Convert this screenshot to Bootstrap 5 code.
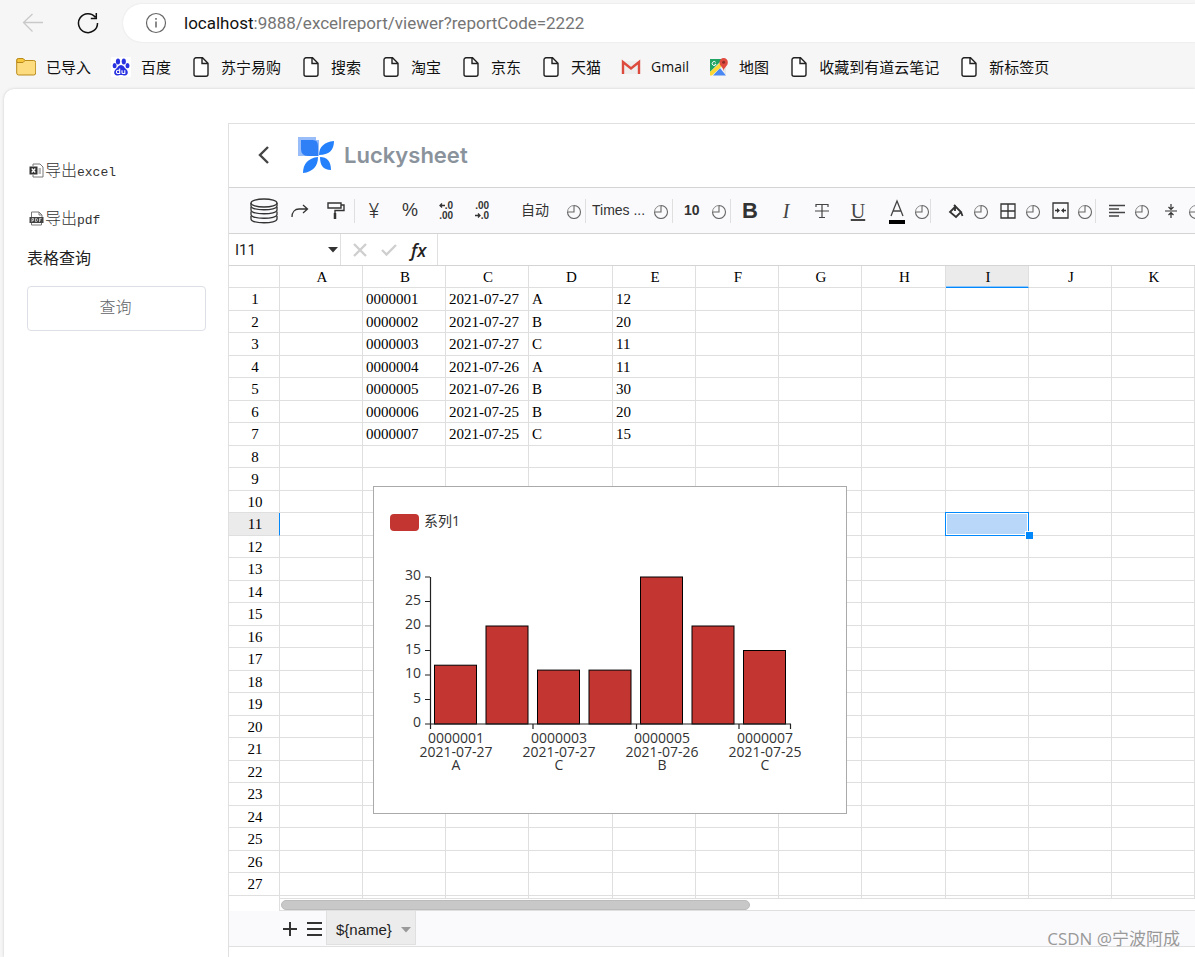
<!DOCTYPE html>
<html lang="zh-CN">
<head>
<meta charset="utf-8">
<meta name="viewport" content="width=device-width, initial-scale=1">
<title>Luckysheet</title>
<link href="https://cdn.jsdelivr.net/npm/bootstrap@5.3.0/dist/css/bootstrap.min.css" rel="stylesheet">
<style>
body{background:#f6f6f6;font-family:"Open Sans","Noto Sans CJK SC",sans-serif;color:#222;overflow:hidden}
button{background:none;border:0;padding:0;color:#333}
svg{display:block;flex:none}
.nav-row{height:45px;padding-left:22px}
.nav-row .reload{margin:0 24px 0 33px}
.address{height:38px;border-radius:19px 0 0 19px;background:#fff;padding-left:22px;gap:17px;box-shadow:0 0 2px #ddd}
.url{font:17px/24px Roboto,sans-serif;white-space:nowrap;color:#757575;outline:0}
.url b{font-weight:400;color:#111}
.marks{height:44px;padding-left:16px;gap:20px}
.marks a{display:flex;align-items:center;gap:10px;color:#111;text-decoration:none;font-size:15px;line-height:20px;white-space:nowrap}
.marks a.latin{font-size:14px}
.page{margin-left:4px;background:#fff;border-radius:10px 0 0 0;box-shadow:0 0 3px #ccc;min-height:calc(100vh - 89px)}
.side{width:224px;padding:69px 22px 0 23px;flex:none}
.side .export{display:flex;align-items:center;gap:1px;height:24px;margin-bottom:24px;font:300 16px/24px "Liberation Mono","Noto Sans CJK SC",monospace;color:#333;padding-left:2px}
.export>span{padding-top:4px}
.export .lat{font-size:13px}
.side h2{font-size:16px;line-height:24px;margin:-8px 0 16px;font-weight:400}
.query{height:45px;border:1px solid #dcdfe6;border-radius:4px;color:#606266;font-size:16px;font-weight:300;font-family:"Noto Sans CJK SC",sans-serif;width:179px;padding:0 2px 5px 0}
.sheet{border:1px solid #e0e0e0;border-width:1px 0 0 1px;margin-top:34px;min-width:0;overflow:hidden}
.brand-row{height:63px;padding:0 0 2px 27px}
.brand-name{font:600 22px/30px Inter,sans-serif;color:#8a939c}
.tools{height:47px;background:#fafafc;border:1px solid #d4d4d4;border-width:1px 0;padding-left:17px;white-space:nowrap}
.tools>*{flex:none}
.tools button{height:34px;display:flex;align-items:center;justify-content:center;font-family:"Liberation Sans","Noto Sans CJK SC",sans-serif}
.tool{width:36px}
.half{width:34px}
.drop{width:16px}
.split{display:flex;margin-right:2px}
.split.ink{margin:0 0 0 4px}
.rule{width:1px;height:24px;background:#dfdfdf}
.rule.loose{margin-right:1px}
.combo{justify-content:space-between!important;font-size:14px;padding:0 3px}
.combo.auto{width:85px;padding-left:21px}
.combo.family{width:86px;padding-left:6px}
.combo.size{width:57px;padding-left:11px;font-weight:700}
.dec{font:700 10px/10px "Liberation Sans",sans-serif;text-align:right}
.dec svg{display:inline-block;vertical-align:1px}
.tools .yen{font:300 20px/24px Roboto,sans-serif}
.tools .pct{font-size:18px}
.tools .bold-btn{font-size:22px;font-weight:700}
.tools .ser{font-family:"Liberation Serif",serif;font-size:20px;color:#444}
.formula{height:32px;border-bottom:1px solid #d4d4d4}
.namebox{width:112px;border-right:1px solid #e0e0e0;padding:0 2px 0 6px}
.namebox input{width:80px;border:0;outline:0;padding:0;font:15px/20px Roboto,sans-serif;color:#222}
.fxset{width:97px;border-right:1px solid #e0e0e0;padding-left:12px;gap:14px}
.fx{font:italic 600 18px/20px "Open Sans",sans-serif;color:#222}
.grid-wrap{position:relative;overflow:hidden;height:632px}
.cells{table-layout:fixed;width:966px;border-collapse:separate;border-spacing:0;font:15px/20px "Liberation Serif","Times New Roman",serif;color:#000}
.cells th,.cells td{border:1px solid #dfdfdf;border-width:0 1px 1px 0;padding:0 0 0 3px;height:22px;font-weight:400;white-space:nowrap;line-height:20px}
.cells th{text-align:center;padding:0 0 0 2px}
.cells tbody tr:nth-child(odd)>*{height:23px}
.cells th.on{background:#ebebeb}
.cells thead th.on{border-bottom-color:#0188fb;box-shadow:inset 0 -1px #8cc6fb}
.cells tbody th.on{border-right-color:#0188fb}
.picked{position:relative}
.picked::before{content:"";position:absolute;inset:-1px;border:1px solid #0188fb;background:#b9d7f9;box-shadow:inset 0 0 0 1px #fff}
.picked::after{content:"";position:absolute;right:-5px;bottom:-4px;width:8px;height:8px;background:#0188fb;border:solid #fff;border-width:1px 0 0 1px}
.chart{position:absolute;left:144px;top:220px;background:#fff;border:1px solid #aaa}
.chart text{font-family:"Open Sans","Noto Sans CJK SC",sans-serif;font-size:14px;fill:#333}
.scroller{height:13px;margin-left:50px;border:1px solid #dfdfdf;border-right:0;padding:1px}
.scroller div{height:10px;width:469px;border-radius:5px;background:#c8c8c8;border:1px solid #bbb}
.tabs{height:36px;background:#fafafc;border-bottom:1px solid #e0e0e0;padding-left:53px}
.tabs .sheet-tab{height:34px;width:90px;background:#ececec;border:1px solid #e0e0e0;border-top:0;padding:5px 4px 0 9px;font:15px/20px "Liberation Sans",sans-serif;color:#222}
.stamp{position:absolute;right:15px;bottom:6px;font-size:17px;line-height:24px;color:#999}
</style>
</head>
<body>
<svg width="0" height="0" class="position-absolute">
<symbol id="doc" viewBox="0 0 20 20"><path d="M5 .8h6.500L17 6.300v11a2 2 0 0 1-2 2H5a2 2 0 0 1-2-2v-14.500a2 2 0 0 1 2-2zM11 1v5.500h6" fill="#fff" stroke="#222" stroke-width="1.400"/></symbol>
<symbol id="clock" viewBox="0 0 16 16"><path d="M8 2.500A6.500 6.500 0 1 1 1.500 9M8 2.500V9H1.500" fill="none" stroke="#666" stroke-width="1.100"/><path d="M8 2.500A6.500 6.500 0 0 0 1.500 9" fill="none" stroke="#888"/></symbol>
</svg>
<header>
<div class="nav-row d-flex align-items-center">
<button aria-label="后退"><svg width="22" height="22" fill="none" stroke="#c9c9c9" stroke-width="1.300"><path d="M21 10.500H1.500M10.500 2 1.500 10.500l9 9"/></svg></button>
<button class="reload" aria-label="刷新"><svg width="22" height="22" fill="none" stroke="#111" stroke-width="1.500"><path d="M18.500 5.300A9.500 9.500 0 1 0 20.500 11M19.300 1v5.500h-5.500"/></svg></button>
<div class="address flex-fill d-flex align-items-center">
<svg width="22" height="22" fill="none" stroke="#666" stroke-width="1.200"><circle cx="11" cy="11" r="9.500"/><path d="M11 9.500v6M11 6v1.700" stroke-width="1.500"/></svg>
<div class="url" role="textbox" aria-label="地址" contenteditable="true" spellcheck="false"><b>localhost</b>:9888/excelreport/viewer?reportCode=2222</div>
</div>
</div>
<nav class="marks d-flex align-items-center">
<a href="#"><svg width="20" height="20"><path d="M.7 4.500v11.500a2 2 0 0 0 2 2h15a2 2 0 0 0 2-2V5.500a2 2 0 0 0-2-2H9l-2-2H2.700a2 2 0 0 0-2 2z" fill="#fddc7f" stroke="#b98a1a"/><path d="M1 5.500h6l2-2-2-2H2.700a2 2 0 0 0-2 2z" fill="#f6c63c" stroke="#b98a1a"/></svg>已导入</a>
<a href="#"><svg width="20" height="20"><path fill="#fff" d="M0 0h20v20H0z"/><g fill="#2932e1"><ellipse cx="7" cy="4.500" rx="2.100" ry="2.900"/><ellipse cx="12.800" cy="4.500" rx="2.100" ry="2.900"/><ellipse cx="3.600" cy="8.700" rx="2" ry="2.600"/><ellipse cx="16.500" cy="8.700" rx="2" ry="2.600"/><path d="M10 8c2.500 0 3 2.300 5 4 3 2.500 2 6.500-1 6.500-2 0-2-.5-4-.5s-2 .5-4 .5c-3 0-4-4-1-6.500C7 10.300 7.500 8 10 8z"/></g><path d="M8.700 11.500v5H7a1.600 1.600 0 0 1 0-3.200h1.700M11 13.300v2.200q0 1 1 1h1.800v-3.200" fill="none" stroke="#fff" stroke-width="1.100"/></svg>百度</a>
<a href="#"><svg width="20" height="20"><use href="#doc"/></svg>苏宁易购</a>
<a href="#"><svg width="20" height="20"><use href="#doc"/></svg>搜索</a>
<a href="#"><svg width="20" height="20"><use href="#doc"/></svg>淘宝</a>
<a href="#"><svg width="20" height="20"><use href="#doc"/></svg>京东</a>
<a href="#"><svg width="20" height="20"><use href="#doc"/></svg>天猫</a>
<a href="#" class="latin"><svg width="20" height="20"><path fill="#eee" d="M1 4h18v13H1z"/><path d="M2 17V5l8 6.500L18 5v12" fill="none" stroke="#dd4b3e" stroke-width="2.400"/></svg>Gmail</a>
<a href="#"><svg width="20" height="20"><path fill="#1fa463" d="M1 2h13L1 15z"/><path fill="#4a89f3" d="M4 18.500 11 11l6 7.500z"/><path fill="#fdd835" d="M1 15 12 5v5L3 18.500H1z"/><path fill="#e8e8e8" d="m12 10 5-1v9z"/><path d="M6.700 5.300a2 2 0 1 0 .3 2H5.500" fill="none" stroke="#fff"/><path d="M14.500 14c0-4-4-4.500-4-8.800a4 4 0 0 1 8.300 0c0 4.300-3.800 4.800-4.300 8.800z" fill="#e04a3f"/><circle cx="14.600" cy="5.200" r="1.500" fill="#8d2b24"/></svg>地图</a>
<a href="#"><svg width="20" height="20"><use href="#doc"/></svg>收藏到有道云笔记</a>
<a href="#"><svg width="20" height="20"><use href="#doc"/></svg>新标签页</a>
</nav>
</header>
<main class="page d-flex position-relative">
<aside class="side">
<button class="export"><svg width="15" height="15" fill="none"><path d="M4 3V1h7l3 3v10H4v-2" stroke="#777"/><path fill="#333" d="M.5 3.500h8v8h-8z"/><path d="m2.700 5.500 3.600 4m0-4-3.600 4" stroke="#fff" stroke-width="1.200"/><path d="M9.500 6H12M9.500 8H12M9.500 10H12" stroke="#777"/></svg><span>导出<span class="lat">excel</span></span></button>
<button class="export"><svg width="15" height="15" fill="none"><path d="M2.500 7V1H10l3 3v3M10 1v3h3M2.500 12v2h10v-2" stroke="#777"/><path fill="#444" d="M.5 6h14v6h-14z"/><path d="M3 11V7.500h1.500v2H3M6.500 7.500v3h1l.8-.7V8l-.8-.5zM10.500 11V7.500h2M10.500 9h1.500" stroke="#ddd" stroke-width=".8"/></svg><span>导出<span class="lat">pdf</span></span></button>
<h2>表格查询</h2>
<button class="query">查询</button>
</aside>
<section class="sheet flex-fill">
<div class="brand-row d-flex align-items-center">
<button aria-label="返回" class="me-4"><svg width="14" height="20" fill="none" stroke="#444" stroke-width="2.400"><path d="M12 2 4 10l8 8"/></svg></button>
<svg width="38" height="38" class="ms-1"><path fill="#98bdf8" d="M0 1h18v3h3v16H0z"/><path fill="#2f80f7" d="M3 4h12q5 0 5 6v10H10q-7 0-7-7z"/><path fill="#2580fc" d="M21 19C21 11 26 6 36 5c0 9-5 14-15 14zM20 21C20 30 15 36 5 37c0-9 5-15 15-16zM22 21c7 0 11 4 11 13-8 0-11-5-11-13z"/></svg>
<div class="brand-name ms-2">Luckysheet</div>
</div>
<div class="tools d-flex align-items-center">
<button class="tool" aria-label="数据"><svg width="28" height="26" fill="#fafafc" stroke="#333" stroke-width="1.300"><path d="M1 18v3c0 5 26 5 26 0v-3"/><path d="M1 13.500v3c0 5 26 5 26 0v-3"/><path d="M1 9v3c0 5 26 5 26 0V9"/><path d="M1 5v3c0 5 26 5 26 0V5"/><ellipse cx="14" cy="5" rx="13" ry="4"/></svg></button>
<button class="tool" aria-label="重做"><svg width="18" height="16" fill="none" stroke="#333" stroke-width="1.300"><path d="M1 14c0-5 3-8 7-8h8M12 2l4.500 4L12 10"/></svg></button>
<button class="tool" aria-label="格式刷"><svg width="18" height="18" fill="none" stroke="#333" stroke-width="1.400"><path d="M1 1h13v5H1zM14 3h3v5.500H8V12"/><path d="M8 11v6" stroke-width="2.500"/></svg></button>
<i class="rule loose"></i>
<button class="tool yen">¥</button>
<button class="tool pct">%</button>
<button class="tool"><span class="dec"><svg width="6" height="5" fill="none" stroke="#333" stroke-width="1.300"><path d="M6 2.500H1M3 .5l-2 2 2 2"/></svg>.0<br>.00</span></button>
<button class="tool"><span class="dec">.00<br><svg width="6" height="5" fill="none" stroke="#333" stroke-width="1.300"><path d="M0 2.500h5M3 .5l2 2-2 2"/></svg>.0</span></button>
<button class="combo auto">自动<svg width="16" height="16"><use href="#clock"/></svg></button>
<i class="rule"></i>
<button class="combo family">Times ...<svg width="16" height="16"><use href="#clock"/></svg></button>
<i class="rule"></i>
<button class="combo size">10<svg width="16" height="16"><use href="#clock"/></svg></button>
<i class="rule loose"></i>
<button class="tool bold-btn">B</button>
<button class="tool ser fst-italic">I</button>
<button class="tool" aria-label="删除线"><svg width="16" height="16" fill="none" stroke="#444" stroke-width="1.200"><path d="M2 4V1.500h12V4M8 1.500v13M5 14.500h6M1 8h14"/></svg></button>
<button class="tool ser"><u>U</u></button>
<span class="split ink"><button class="half" aria-label="文字颜色"><svg width="18" height="26" fill="none"><path d="m3 18 6-15 6 15M5 13h8" stroke="#444" stroke-width="1.300"/><path fill="#000" d="M1 22h16v4H1z"/></svg></button><button class="drop"><svg width="16" height="16"><use href="#clock"/></svg></button></span>
<i class="rule me-2"></i>
<span class="split"><button class="half" aria-label="填充颜色"><svg width="16" height="16" fill="none" stroke="#333" stroke-width="1.800"><path d="m6 2 7 7-5 5-6-5 5-5v4M13 9l1.500 4"/></svg></button><button class="drop"><svg width="16" height="16"><use href="#clock"/></svg></button></span>
<span class="split"><button class="half" aria-label="边框"><svg width="16" height="16" fill="none" stroke="#333" stroke-width="1.300"><path d="M1 1h14v14H1zM8 1v14M1 8h14"/></svg></button><button class="drop"><svg width="16" height="16"><use href="#clock"/></svg></button></span>
<span class="split"><button class="half" aria-label="合并"><svg width="17" height="17" fill="none" stroke="#333" stroke-width="1.300"><path d="M1 1h15v15H1zM3 8.500h3.500m4 0H14"/><path d="m5 6 3 2.500L5 11zm7 0L9 8.500 12 11z" fill="#333" stroke="none"/></svg></button><button class="drop"><svg width="16" height="16"><use href="#clock"/></svg></button></span>
<i class="rule me-1"></i>
<span class="split me-1"><button class="half" aria-label="对齐"><svg width="16" height="14" fill="none" stroke="#444" stroke-width="1.300"><path d="M0 1.500h16M0 5h10M0 8.500h16M0 12h10"/></svg></button><button class="drop"><svg width="16" height="16"><use href="#clock"/></svg></button></span>
<span class="split"><button class="half" aria-label="垂直对齐"><svg width="12" height="14" fill="none" stroke="#333" stroke-width="1.200"><path d="M0 7h12M6 0v5M6 14V9M3.500 3 6 5.500 8.500 3m-5 8L6 8.500 8.500 11"/></svg></button><button class="drop"><svg width="16" height="16"><use href="#clock"/></svg></button></span>
</div>
<div class="formula d-flex">
<div class="namebox d-flex align-items-center justify-content-between"><input aria-label="名称框" value="I11"><svg width="10" height="6"><path fill="#333" d="M0 0h10L5 5.500z"/></svg></div>
<div class="fxset d-flex align-items-center">
<svg width="14" height="14" fill="none" stroke="#cfcfcf" stroke-width="2.400"><path d="m1 1 12 12M13 1 1 13"/></svg>
<svg width="16" height="14" fill="none" stroke="#cfcfcf" stroke-width="2.400"><path d="m1 7 4.500 4.500L15 2"/></svg>
<span class="fx">fx</span>
</div>
</div>
<div class="grid-wrap">
<table class="cells">
<colgroup id="cols"></colgroup><thead id="head"></thead><tbody id="rows"></tbody>
</table>
<div class="chart">
<svg width="472" height="326">
<rect x="16" y="27" width="29" height="17" rx="4" fill="#c23531"/><text x="50" y="39">系列1</text>
<g id="bars" fill="#c23531" stroke="#000"></g>
<path d="M56.500 90v152M51 237h366M51 212.500h5M51 188h5M51 163.500h5M51 139h5M51 114.500h5M51 90h5M159 237v5M262.500 237v5M365 237v5M416.500 237v5" fill="none" stroke="#222" stroke-width="1.200"/>
<g text-anchor="end"><text x="47" y="93">30</text><text x="47" y="118">25</text><text x="47" y="142">20</text><text x="47" y="167">15</text><text x="47" y="191">10</text><text x="47" y="216">5</text><text x="47" y="240">0</text></g>
<g text-anchor="middle" id="labels"></g>
</svg>
</div>
</div>
<div class="scroller"><div></div></div>
<div class="tabs d-flex">
<button aria-label="新建" class="me-2"><svg width="16" height="16" stroke="#333" stroke-width="2"><path d="M8 1v14M1 8h14"/></svg></button>
<button aria-label="列表" class="me-1"><svg width="16" height="16" stroke="#333" stroke-width="2"><path d="M1 2h15M1 8h15M1 14h15"/></svg></button>
<button class="sheet-tab d-flex align-items-center justify-content-between">${name}<svg width="10" height="6"><path fill="#999" d="M0 0h10L5 5.500z"/></svg></button>
</div>
</section>
<div class="stamp">CSDN @宁波阿成</div>
</main>
<script>
const data=[["0000001","2021-07-27","A",12],["0000002","2021-07-27","B",20],["0000003","2021-07-27","C",11],["0000004","2021-07-26","A",11],["0000005","2021-07-26","B",30],["0000006","2021-07-25","B",20],["0000007","2021-07-25","C",15]];
const letters=[..."ABCDEFGHIJK"];
const el=id=>document.getElementById(id);
el("cols").innerHTML='<col style="width:51px">'+letters.map((_,i)=>`<col style="width:${i%4==3?84:83}px">`).join("");
el("head").innerHTML="<tr><th></th>"+letters.map(l=>`<th${l=="I"?' class="on"':""}>${l}</th>`).join("")+"</tr>";
let html="";
for(let r=1;r<=28;r++){
  html+=`<tr><th${r==11?' class="on"':""}>${r<28?r:""}</th>`+letters.map((l,c)=>`<td${r==11&&l=="I"?' class="picked"':""}>${(data[r-1]||[])[c-1]??""}</td>`).join("")+"</tr>";
}
el("rows").innerHTML=html;
el("bars").innerHTML=data.map((d,i)=>`<rect x="${60.5+i*51.5}" y="${237-d[3]*4.9}" width="42" height="${d[3]*4.9}"/>`).join("");
el("labels").innerHTML=[0,2,4,6].map(i=>{const x=82+i*51.5;return `<text x="${x}" y="256">${data[i][0]}</text><text x="${x}" y="270">${data[i][1]}</text><text x="${x}" y="283">${data[i][2]}</text>`}).join("");
</script>
<script src="https://cdn.jsdelivr.net/npm/bootstrap@5.3.0/dist/js/bootstrap.bundle.min.js"></script>
</body>
</html>
